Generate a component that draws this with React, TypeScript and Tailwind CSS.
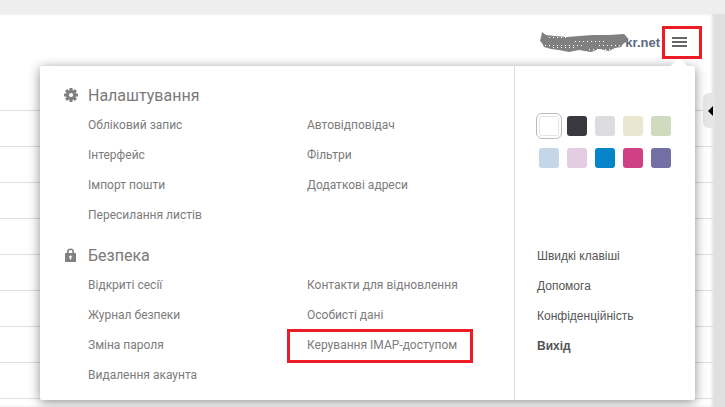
import React from 'react';

const settingsLeft = ['Обліковий запис', 'Інтерфейс', 'Імпорт пошти', 'Пересилання листів'];
const settingsRight = ['Автовідповідач', 'Фільтри', 'Додаткові адреси'];
const securityLeft = ['Відкриті сесії', 'Журнал безпеки', 'Зміна пароля', 'Видалення акаунта'];
const securityRight = ['Контакти для відновлення', 'Особисті дані'];
const swatches = [
  'bg-white', 'bg-[#38383f]', 'bg-[#dcdde0]', 'bg-[#ebe6cf]', 'bg-[#d0dabf]',
  'bg-[#c5d6e8]', 'bg-[#e4cde2]', 'bg-[#0584c9]', 'bg-[#d04085]', 'bg-[#7470a6]',
];
const sideLinks = ['Швидкі клавіші', 'Допомога', 'Конфіденційність'];

const MenuLink = ({ label }: { label: string }) => (
  <div className="h-[30px] leading-[30px] text-[12px] text-[#7c7c7c] whitespace-nowrap">{label}</div>
);

const GearIcon = () => (
  <svg width="14" height="14" viewBox="0 0 14 14" className="shrink-0">
    {[0, 45, 90, 135].map((a) => (
      <rect key={a} x="5.4" y="0" width="3.2" height="14" rx="0.4" fill="#808080" transform={`rotate(${a} 7 7)`} />
    ))}
    <circle cx="7" cy="7" r="5" fill="#808080" />
    <circle cx="7" cy="7" r="2.100" fill="#ffffff" />
  </svg>
);

const LockIcon = () => (
  <svg width="13" height="14" viewBox="1 0 11 14" className="shrink-0">
    <path
      fill="#808080"
      fillRule="evenodd"
      d="M3 5V4a3.500 3.500 0 0 1 7 0v1h1.200c.5 0 .8.3.8.8v7.400c0 .5-.3.8-.8.8H1.800c-.5 0-.8-.3-.8-.8V5.800c0-.5.3-.8.8-.8H3zm1.600 0h3.800V4a1.900 1.900 0 0 0-3.800 0v1zM6.500 7.500a1.300 1.300 0 0 0-.7 2.400V11.500h1.400V9.900a1.300 1.300 0 0 0-.7-2.400z"
    />
  </svg>
);

const EmailSmudge = () => (
  <svg width="88" height="21" viewBox="0 0 88 21" className="shrink-0 -mr-[3px]">
    <path
      fill="#808080"
      d="M2 0 L6 3 L15 4 L27 5 L39 4 L53 3 L69 3 L84 2 L87 5 L86 10 L83 12 L81 15 L75 16 L69 19 L59 17 L51 20 L39 18 L29 20 L19 18 L11 17 L4 15 L2 11 L0 9 L1 5 Z"
    />
    <path
      stroke="#ffffff"
      strokeWidth="1"
      strokeDasharray="1 3"
      d="M5 13.500 H43 M49 17.500 H71 M9 5.500 H29 M35 9.500 H65 M13 15.500 H37 M59 13.500 H81"
    />
  </svg>
);

export default function App() {
  return (
    <div className="relative w-[725px] h-[407px] overflow-hidden bg-[#eeeeee] font-['Liberation_Sans',sans-serif]">
      <div className="flex h-full pt-[14px]">
        {/* mail list behind the menu */}
        <div className="w-[715px] bg-white shadow-[inset_-3px_0_3px_rgba(0,0,0,0.12)]">
          <div className="h-[97px] border-b border-[#dddddd] flex items-start justify-end">
            <div className="flex items-center mt-[18px] mr-[55px]">
              <EmailSmudge />
              <span className="text-[13px] font-bold text-[#5b6a80] leading-[15px]">kr.net</span>
            </div>
          </div>
          {[0, 1, 2, 3, 4, 5, 6, 7].map((row) => (
            <div key={row} className="h-[36px] border-b border-[#dddddd]" />
          ))}
        </div>
        <div className="relative z-10 flex-1 bg-[#e0e0e0] pt-[79px]">
          <div className="h-[35px] -ml-[12px] w-[12px] rounded-l-[6px] bg-[#e6e6e6] flex items-center pl-[5px]">
            <div className="w-0 h-0 border-y-[5px] border-y-transparent border-r-[5px] border-r-black" />
          </div>
        </div>
      </div>

      {/* hamburger with the red highlight */}
      <div className="absolute left-[662px] top-[26px] w-[40px] h-[33px] border-[3px] border-[#ed1c24] z-30 flex flex-col items-center justify-center gap-[2px] pr-[5px] pb-[1px]">
        <div className="w-[15px] h-[2px] bg-[#666666]" />
        <div className="w-[15px] h-[2px] bg-[#666666]" />
        <div className="w-[15px] h-[2px] bg-[#666666]" />
      </div>

      {/* dropdown menu */}
      <div className="absolute left-[40px] top-[66px] w-[655px] h-[334px] z-20 bg-white rounded-[2px] shadow-[0_2px_12px_rgba(0,0,0,0.45)] flex font-['Roboto',sans-serif]">
        <div className="absolute left-[633px] -top-[6px] w-[12px] h-[12px] rotate-45 bg-white" />
        <div className="w-[474px] pl-[24px] pt-[14px]">
          <div className="h-[30px] flex items-center">
            <GearIcon />
            <span className="ml-[10px] pt-[2px] text-[16px] text-[#7a7a7a]">Налаштування</span>
          </div>
          <div className="grid grid-cols-[219px_1fr] pl-[24px]">
            <div>{settingsLeft.map((l) => <MenuLink key={l} label={l} />)}</div>
            <div>{settingsRight.map((l) => <MenuLink key={l} label={l} />)}</div>
          </div>
          <div className="h-[30px] mt-[10px] flex items-center">
            <LockIcon />
            <span className="ml-[11px] pt-[2px] text-[16px] text-[#7a7a7a]">Безпека</span>
          </div>
          <div className="grid grid-cols-[219px_1fr] pl-[24px]">
            <div>{securityLeft.map((l) => <MenuLink key={l} label={l} />)}</div>
            <div>
              {securityRight.map((l) => <MenuLink key={l} label={l} />)}
              <div className="relative">
                <MenuLink label="Керування IMAP-доступом" />
                <div className="absolute -left-[20px] -top-[1px] w-[186px] h-[34px] border-[3px] border-[#ed1c24]" />
              </div>
            </div>
          </div>
        </div>

        <div className="flex-1 border-l border-[#dddddd] font-['Liberation_Sans',sans-serif]">
          <div className="grid grid-cols-[repeat(5,20px)] gap-x-[8px] gap-y-[12px] pl-[24px] pt-[50px]">
            {swatches.map((c, i) => (
              <div
                key={c}
                className={`w-[20px] h-[20px] rounded-[3px] ${c} ${i === 0 ? 'border border-[#e4e4e4] outline outline-[#bbbbbb] outline-offset-[2px]' : ''}`}
              />
            ))}
          </div>
          <div className="pl-[22px] mt-[73px]">
            {sideLinks.map((l) => (
              <div key={l} className="h-[30px] leading-[30px] text-[12px] text-[#555555] whitespace-nowrap">{l}</div>
            ))}
            <div className="h-[30px] leading-[30px] text-[12px] font-bold text-[#555555]">Вихід</div>
          </div>
        </div>
      </div>
    </div>
  );
}
